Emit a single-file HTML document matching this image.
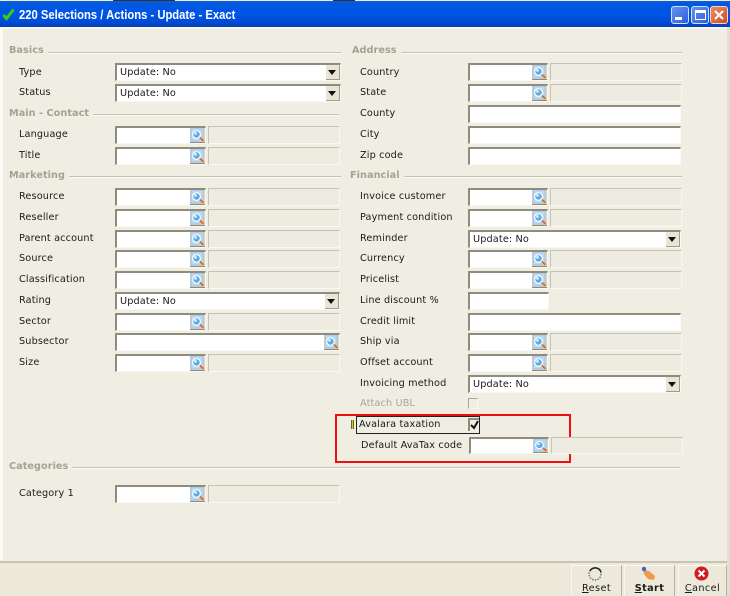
<!DOCTYPE html>
<html><head><meta charset="utf-8"><style>
html,body{margin:0;padding:0}
body{width:730px;height:596px;position:relative;overflow:hidden;background:#f0eee2;font:9.7px/14px "DejaVu Sans",sans-serif;color:#1a1a1a;letter-spacing:.14px}
div,svg,span{position:absolute;box-sizing:border-box}
u{position:static}
.tb{left:0;top:1px;width:730px;height:26px;background:linear-gradient(#0a5fd8 0,#0058e2 3px,#0055e5 14px,#0048cf 23px,#0a3fb0 26px)}
.t{left:19px;top:6px;color:#fff;font:bold 13px/18px "Liberation Sans",sans-serif;white-space:nowrap;letter-spacing:0;transform:scaleX(.865);transform-origin:0 0}
.h{font-weight:bold;color:#a5a294;white-space:nowrap;letter-spacing:.05px;background:#f0eee2;padding-right:4px;height:14px;margin-top:1px}
.ln{height:2px;background:linear-gradient(#c4c1b2 50%,#fbfaf5 50%)}
.l{white-space:nowrap;margin-top:1px}
.f{background:#fff;border-top:2px solid #8f8c7e;border-left:2px solid #8f8c7e;border-right:1px solid #f8f7f0;border-bottom:1px solid #f8f7f0;height:18px}
.r{background:#eeece0;border:1px solid #c6c3b4;border-right-color:#f9f8f2;border-bottom-color:#f9f8f2;height:18px}
.v{left:3px;top:1px;white-space:nowrap}
.a{width:14px;height:15px;background:#e8e5d6;border-right:1px solid #a09d8e;border-bottom:1px solid #a09d8e}
.a:after{content:"";position:absolute;left:2px;top:5px;border:4px solid transparent;border-top:5px solid #111;border-bottom:0}
.s{width:15px;height:15px}
.b{top:565px;height:31px;background:#ecE9da;border:1px solid #f8f7f0;border-right-color:#b5b2a3;border-bottom:0;text-align:center}
.bl{left:0;right:0;top:16px;text-align:center;position:absolute;letter-spacing:.4px}
</style></head><body>
<svg width="0" height="0" style="left:0;top:0"><defs><symbol id="q" viewBox="0 0 15 15" preserveAspectRatio="none"><rect x="0" y="0" width="15" height="15" fill="#d8d5c5"/><rect x="1" y="0" width="12" height="13" fill="#bcd8f2" stroke="#8db4dc" stroke-width=".6"/><circle cx="6.5" cy="6.5" r="3.8" fill="#5aaee6" stroke="#ffffff" stroke-width="1.1"/><circle cx="5.5" cy="5.4" r="1.4" fill="#d8f0ff"/><path d="M9.8 9.6L13.6 12.8" stroke="#e06a1a" stroke-width="1.8"/><path d="M0 14.5H15" stroke="#8f8c7e"/></symbol></defs></svg>

<div style="left:113px;top:0;width:62px;height:1px;background:#333"></div>
<div style="left:333px;top:0;width:22px;height:1px;background:#333"></div>
<div class="tb"></div>
<svg style="left:2px;top:8px" width="13" height="13" viewBox="0 0 13 13"><path d="M1.5 7L4.5 10.5L11.5 1.5" fill="none" stroke="#35d018" stroke-width="3"/></svg>
<div class="t">220 Selections / Actions - Update - Exact</div>
<div style="left:671px;top:6px;width:18px;height:18px;border:1px solid #cfe0fa;border-radius:3px;background:linear-gradient(135deg,#6a93ee,#2a5edc)"><div style="left:3px;top:10px;width:7px;height:3px;background:#fff"></div></div>
<div style="left:691px;top:6px;width:18px;height:18px;border:1px solid #cfe0fa;border-radius:3px;background:linear-gradient(135deg,#6a93ee,#2a5edc)"><div style="left:3px;top:3px;width:11px;height:10px;border:1px solid #fff;border-top-width:3px"></div></div>
<div style="left:710px;top:6px;width:18px;height:18px;border:1px solid #f0d8d0;border-radius:3px;background:linear-gradient(135deg,#e8906a,#d4481f)"><svg style="left:3px;top:3px" width="10" height="10" viewBox="0 0 10 10"><path d="M1 1L9 9M9 1L1 9" stroke="#fff" stroke-width="2"/></svg></div>
<div style="left:0;top:27px;width:3px;height:533px;background:#fbfaf5"></div>
<div style="left:3px;top:27px;width:724px;height:2px;background:#f8f7f0"></div>
<div style="left:727px;top:27px;width:3px;height:569px;background:#e2dfd0"></div>
<div style="left:0;top:561px;width:727px;height:2px;background:#c7c4b5"></div>
<div style="left:0;top:563px;width:727px;height:33px;background:#ece9da"></div>

<!-- section headers -->
<div class="ln" style="left:9px;top:52px;width:332px"></div><div class="h" style="left:9px;top:43px">Basics</div>
<div class="ln" style="left:9px;top:114px;width:330px"></div><div class="h" style="left:9px;top:106px">Main - Contact</div>
<div class="ln" style="left:9px;top:176px;width:332px"></div><div class="h" style="left:9px;top:168px">Marketing</div>
<div class="ln" style="left:9px;top:467px;width:671px"></div><div class="h" style="left:9px;top:459px">Categories</div>
<div class="ln" style="left:352px;top:52px;width:330px"></div><div class="h" style="left:352px;top:43px">Address</div>
<div class="ln" style="left:352px;top:176px;width:330px"></div><div class="h" style="left:350px;top:168px">Financial</div>

<!-- left column -->
<div class="l" style="left:19px;top:65px">Type</div><div class="f" style="left:115px;top:63px;width:226px"><div class="v">Update: No</div><div class="a" style="right:0;top:0"></div></div>
<div class="l" style="left:19px;top:85px">Status</div><div class="f" style="left:115px;top:84px;width:226px"><div class="v">Update: No</div><div class="a" style="right:0;top:0"></div></div>

<div class="l" style="left:19px;top:127px">Language</div><div class="f" style="left:115px;top:126px;width:91px"><svg class="s" style="right:0;top:0"><use href="#q"/></svg></div><div class="r" style="left:208px;top:126px;width:132px"></div>
<div class="l" style="left:19px;top:148px">Title</div><div class="f" style="left:115px;top:147px;width:91px"><svg class="s" style="right:0;top:0"><use href="#q"/></svg></div><div class="r" style="left:208px;top:147px;width:132px"></div>

<div class="l" style="left:19px;top:189px">Resource</div><div class="f" style="left:115px;top:188px;width:91px"><svg class="s" style="right:0;top:0"><use href="#q"/></svg></div><div class="r" style="left:208px;top:188px;width:132px"></div>
<div class="l" style="left:19px;top:210px">Reseller</div><div class="f" style="left:115px;top:209px;width:91px"><svg class="s" style="right:0;top:0"><use href="#q"/></svg></div><div class="r" style="left:208px;top:209px;width:132px"></div>
<div class="l" style="left:19px;top:231px">Parent account</div><div class="f" style="left:115px;top:230px;width:91px"><svg class="s" style="right:0;top:0"><use href="#q"/></svg></div><div class="r" style="left:208px;top:230px;width:132px"></div>
<div class="l" style="left:19px;top:251px">Source</div><div class="f" style="left:115px;top:250px;width:91px"><svg class="s" style="right:0;top:0"><use href="#q"/></svg></div><div class="r" style="left:208px;top:250px;width:132px"></div>
<div class="l" style="left:19px;top:272px">Classification</div><div class="f" style="left:115px;top:271px;width:91px"><svg class="s" style="right:0;top:0"><use href="#q"/></svg></div><div class="r" style="left:208px;top:271px;width:132px"></div>
<div class="l" style="left:19px;top:293px">Rating</div><div class="f" style="left:115px;top:292px;width:225px"><div class="v">Update: No</div><div class="a" style="right:0;top:0"></div></div>
<div class="l" style="left:19px;top:314px">Sector</div><div class="f" style="left:115px;top:313px;width:91px"><svg class="s" style="right:0;top:0"><use href="#q"/></svg></div><div class="r" style="left:208px;top:313px;width:132px"></div>
<div class="l" style="left:19px;top:334px">Subsector</div><div class="f" style="left:115px;top:333px;width:225px"><svg class="s" style="right:0;top:0"><use href="#q"/></svg></div>
<div class="l" style="left:19px;top:355px">Size</div><div class="f" style="left:115px;top:354px;width:91px"><svg class="s" style="right:0;top:0"><use href="#q"/></svg></div><div class="r" style="left:208px;top:354px;width:132px"></div>
<div class="l" style="left:19px;top:486px">Category 1</div><div class="f" style="left:115px;top:485px;width:91px"><svg class="s" style="right:0;top:0"><use href="#q"/></svg></div><div class="r" style="left:208px;top:485px;width:132px"></div>

<!-- right column -->
<div class="l" style="left:360px;top:65px">Country</div><div class="f" style="left:468px;top:63px;width:80px"><svg class="s" style="right:0;top:0"><use href="#q"/></svg></div><div class="r" style="left:550px;top:63px;width:132px"></div>
<div class="l" style="left:360px;top:85px">State</div><div class="f" style="left:468px;top:84px;width:80px"><svg class="s" style="right:0;top:0"><use href="#q"/></svg></div><div class="r" style="left:550px;top:84px;width:132px"></div>
<div class="l" style="left:360px;top:106px">County</div><div class="f" style="left:468px;top:105px;width:213px"></div>
<div class="l" style="left:360px;top:127px">City</div><div class="f" style="left:468px;top:126px;width:213px"></div>
<div class="l" style="left:360px;top:148px">Zip code</div><div class="f" style="left:468px;top:147px;width:213px"></div>

<div class="l" style="left:360px;top:189px">Invoice customer</div><div class="f" style="left:468px;top:188px;width:80px"><svg class="s" style="right:0;top:0"><use href="#q"/></svg></div><div class="r" style="left:550px;top:188px;width:132px"></div>
<div class="l" style="left:360px;top:210px">Payment condition</div><div class="f" style="left:468px;top:209px;width:80px"><svg class="s" style="right:0;top:0"><use href="#q"/></svg></div><div class="r" style="left:550px;top:209px;width:132px"></div>
<div class="l" style="left:360px;top:231px">Reminder</div><div class="f" style="left:468px;top:230px;width:213px"><div class="v">Update: No</div><div class="a" style="right:0;top:0"></div></div>
<div class="l" style="left:360px;top:251px">Currency</div><div class="f" style="left:468px;top:250px;width:80px"><svg class="s" style="right:0;top:0"><use href="#q"/></svg></div><div class="r" style="left:550px;top:250px;width:132px"></div>
<div class="l" style="left:360px;top:272px">Pricelist</div><div class="f" style="left:468px;top:271px;width:80px"><svg class="s" style="right:0;top:0"><use href="#q"/></svg></div><div class="r" style="left:550px;top:271px;width:132px"></div>
<div class="l" style="left:360px;top:293px">Line discount %</div><div class="f" style="left:468px;top:292px;width:81px"></div>
<div class="l" style="left:360px;top:314px">Credit limit</div><div class="f" style="left:468px;top:313px;width:213px"></div>
<div class="l" style="left:360px;top:334px">Ship via</div><div class="f" style="left:468px;top:333px;width:80px"><svg class="s" style="right:0;top:0"><use href="#q"/></svg></div><div class="r" style="left:550px;top:333px;width:132px"></div>
<div class="l" style="left:360px;top:355px">Offset account</div><div class="f" style="left:468px;top:354px;width:80px"><svg class="s" style="right:0;top:0"><use href="#q"/></svg></div><div class="r" style="left:550px;top:354px;width:132px"></div>
<div class="l" style="left:360px;top:376px">Invoicing method</div><div class="f" style="left:468px;top:375px;width:213px"><div class="v">Update: No</div><div class="a" style="right:0;top:0"></div></div>
<div class="l" style="left:360px;top:396px;color:#a8a698">Attach UBL</div>
<div style="left:468px;top:398px;width:10px;height:11px;border:1px solid #a8a698;border-right-color:#f8f7f0;border-bottom-color:#f8f7f0"></div>

<!-- red highlight -->
<div style="left:335px;top:414px;width:236px;height:49px;border:2px solid #f01010"></div>
<div style="left:351px;top:420px;width:3px;height:9px;background:#d8c818;border:1px solid #6a6420;border-width:0 1px"></div>
<div style="left:356px;top:416px;width:124px;height:18px;border:1px solid #222;background:#f0eee2"></div>
<div class="l" style="left:359px;top:417px">Avalara taxation</div>
<div style="left:468px;top:418px;width:11px;height:13px;border-top:2px solid #8f8c7e;border-left:2px solid #8f8c7e"><svg style="left:0;top:0" width="9" height="10" viewBox="0 0 9 10"><path d="M1 5L4 8L8 1" fill="none" stroke="#111" stroke-width="2"/></svg></div>
<div class="l" style="left:361px;top:438px">Default AvaTax code</div>
<div class="f" style="left:469px;top:437px;width:80px;height:17px"><svg class="s" style="right:0;top:0;height:14px"><use href="#q"/></svg></div><div class="r" style="left:551px;top:437px;width:132px;height:17px"></div>

<!-- buttons -->
<div class="b" style="left:571px;width:51px"><svg style="left:15px;top:0" width="16" height="16" viewBox="0 0 16 16"><circle cx="8" cy="8" r="6" fill="none" stroke="#777" stroke-width="1.5" stroke-dasharray="1.5 1.2"/><path d="M3 5A6 6 0 0 1 14 6" fill="none" stroke="#222" stroke-width="1.5"/></svg><div class="bl"><u>R</u>eset</div></div>
<div class="b" style="left:624px;width:51px"><svg style="left:15px;top:0" width="18" height="16" viewBox="0 0 18 16"><path d="M3 4L9 5L15 10L14 14L8 13L4 8Z" fill="#ee9a4a"/><circle cx="4" cy="3" r="2.2" fill="#3a66c8"/></svg><div class="bl" style="font-weight:bold"><u>S</u>tart</div></div>
<div class="b" style="left:678px;width:49px"><svg style="left:15px;top:0" width="15" height="15" viewBox="0 0 15 15"><circle cx="7.5" cy="7.5" r="7" fill="#d21a22"/><path d="M4.5 4.5L10.5 10.5M10.5 4.5L4.5 10.5" stroke="#fff" stroke-width="2"/></svg><div class="bl"><u>C</u>ancel</div></div>
</body></html>
